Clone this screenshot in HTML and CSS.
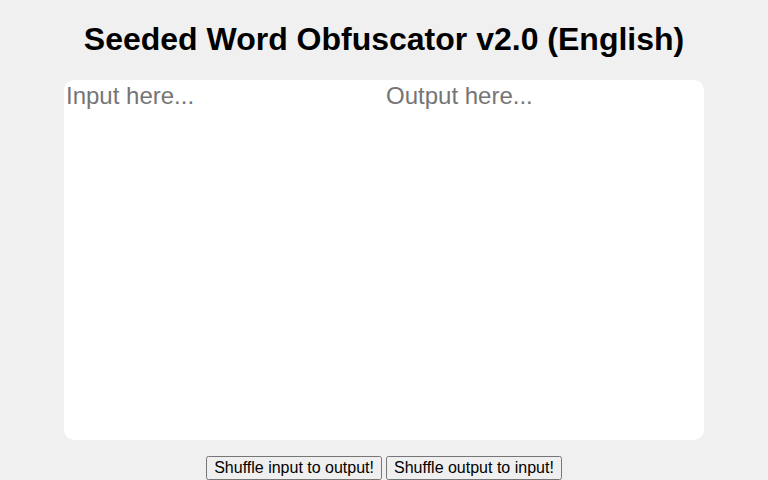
FILE: index.html
```html
<!DOCTYPE html>
<html>
<head>
<meta charset="utf-8">
<link rel="stylesheet" href="styles.css">
</head>
<body>
<h1 class="title">Seeded Word Obfuscator v2.0 (English)</h1>
<div class="panel">
  <textarea class="box" placeholder="Input here..."></textarea>
  <textarea class="box" placeholder="Output here..."></textarea>
</div>
<div class="actions">
  <button class="btn">Shuffle input to output!</button>
  <button class="btn">Shuffle output to input!</button>
</div>
</body>
</html>
```
FILE: styles.css
```css
html, body {
  margin: 0;
  padding: 0;
  background: #f0f0f0;
  font-family: "Liberation Sans", Arial, sans-serif;
}
.title {
  font-size: 32px;
  font-weight: bold;
  text-align: center;
  margin: 21px 0 22px;
  line-height: 37px;
  color: #000;
}
.panel {
  width: 640px;
  height: 360px;
  margin: 0 auto;
  background: #fff;
  border-radius: 10px;
  display: flex;
  overflow: hidden;
}
.box {
  width: 320px;
  height: 360px;
  box-sizing: border-box;
  border: none;
  outline: none;
  resize: none;
  background: transparent;
  padding: 2px;
  margin: 0;
  font-family: "Liberation Sans", Arial, sans-serif;
  font-size: 24px;
}
.box::placeholder {
  color: #757575;
}
.actions {
  display: flex;
  justify-content: center;
  gap: 4px;
  margin-top: 16px;
}
.btn {
  font-family: "Liberation Sans", Arial, sans-serif;
  font-size: 16px;
  padding: 1px 6px;
  height: 24px;
}
```
